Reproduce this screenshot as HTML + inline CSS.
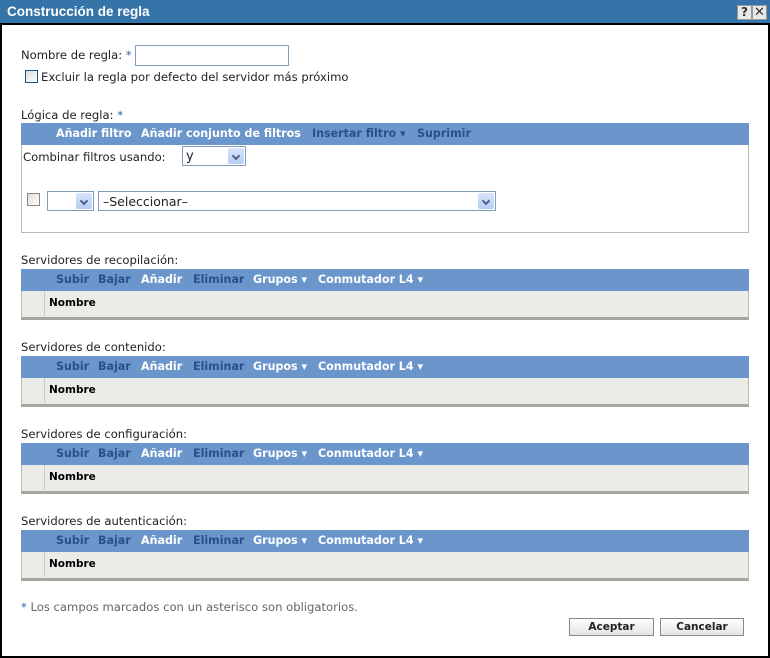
<!DOCTYPE html>
<html><head><meta charset="utf-8"><style>
*{margin:0;padding:0;box-sizing:border-box}
body{width:770px;height:658px;background:#fff;font-family:"DejaVu Sans","Liberation Sans",sans-serif;font-size:11.6px;color:#222;position:relative;overflow:hidden}
.a{position:absolute;white-space:nowrap}
.win{position:absolute;left:0;top:0;width:770px;height:658px;border:2px solid #000;border-top:none}
.title{left:0;top:0;width:770px;height:25px;background:#3574a8;border-bottom:2px solid #000}
.tb{position:absolute;left:21px;width:728px;height:22px;background:#6a96cc;font-weight:bold;font-size:11.1px}
.tb span{position:absolute;top:4px}
.w{color:#fff}.d{color:#2b4f8e}
.hdr{position:absolute;left:21px;width:728px;height:29px;background:#ebebe7;border:1px solid #b9b9ad;border-top:none;border-bottom:3px solid #a6a69e}
.hdr i{position:absolute;left:22px;top:0;width:1px;height:25px;background:#c9c9bf}
.hdr b{position:absolute;left:27px;top:6px;font-size:10.5px;color:#000}
.sel{position:absolute;border:1px solid #7f9db9;background:#fff}
.arr{position:absolute;right:1px;top:1px;width:16px;bottom:1px;background:linear-gradient(#d8e4fb,#b7cdf5);border-radius:2px}
.arr:after{content:"";position:absolute;left:5px;top:5px;width:4px;height:4px;border-right:2px solid #4d6185;border-bottom:2px solid #4d6185;transform:rotate(45deg)}
.cb{position:absolute;width:13px;height:13px;border:1px solid #1c5180;background:linear-gradient(135deg,#dcdcd7,#fff)}
.btn{position:absolute;top:618px;height:18px;border:1px solid #888;background:linear-gradient(#fff,#e4e4e4);font-weight:bold;font-size:10.5px;text-align:center;line-height:16px;color:#222}
.st{color:#2a63b0}
</style></head><body>
<div class="win"></div>
<div class="a title"></div>
<div class="a" style="left:7px;top:4px;color:#fff;font-weight:bold;font-size:13.5px;font-family:'Liberation Sans',sans-serif">Construcción de regla</div>
<div class="a" style="left:737px;top:5px;width:15px;height:15px;background:#e8e8e8;border:1px solid #999;font-weight:bold;font-size:12px;text-align:center;line-height:13px;color:#333">?</div>
<div class="a" style="left:752px;top:5px;width:15px;height:15px;background:#e8e8e8;border:1px solid #999;font-size:13px;text-align:center;line-height:13px;color:#333">✕</div>

<div class="a" style="left:21px;top:48px">Nombre de regla: <span class="st">*</span></div>
<div class="a" style="left:135px;top:45px;width:154px;height:21px;border:1px solid #7f9db9"></div>
<div class="cb" style="left:25px;top:70px"></div>
<div class="a" style="left:41px;top:70px">Excluir la regla por defecto del servidor más próximo</div>

<div class="a" style="left:21px;top:108px">Lógica de regla: <span class="st">*</span></div>
<div class="a" style="left:21px;top:123px;width:728px;height:110px;border:1px solid #b9b9ad"></div>
<div class="tb" style="top:123px"><span class="w" style="left:35px">Añadir filtro</span><span class="w" style="left:120px">Añadir conjunto de filtros</span><span class="d" style="left:291px">Insertar filtro ▾</span><span class="d" style="left:396px">Suprimir</span></div>
<div class="a" style="left:23px;top:150px">Combinar filtros usando:</div>
<div class="sel" style="left:182px;top:146px;width:64px;height:20px"><span class="a" style="left:3px;top:2px;font-size:13px">y</span><div class="arr"></div></div>
<div class="cb" style="left:27px;top:193px;border-color:#888"></div>
<div class="sel" style="left:47px;top:191px;width:47px;height:20px"><div class="arr"></div></div>
<div class="sel" style="left:98px;top:191px;width:398px;height:20px"><span class="a" style="left:4px;top:2px;font-size:12.5px">–Seleccionar–</span><div class="arr"></div></div>

<div class="a" style="left:21px;top:253px">Servidores de recopilación:</div>
<div class="tb" style="top:269px"><span class="d" style="left:35px">Subir</span><span class="d" style="left:77px">Bajar</span><span class="w" style="left:120px">Añadir</span><span class="d" style="left:172px">Eliminar</span><span class="w" style="left:232px">Grupos ▾</span><span class="w" style="left:297px">Conmutador L4 ▾</span></div>
<div class="hdr" style="top:291px"><i></i><b>Nombre</b></div>

<div class="a" style="left:21px;top:340px">Servidores de contenido:</div>
<div class="tb" style="top:356px"><span class="d" style="left:35px">Subir</span><span class="d" style="left:77px">Bajar</span><span class="w" style="left:120px">Añadir</span><span class="d" style="left:172px">Eliminar</span><span class="w" style="left:232px">Grupos ▾</span><span class="w" style="left:297px">Conmutador L4 ▾</span></div>
<div class="hdr" style="top:378px"><i></i><b>Nombre</b></div>

<div class="a" style="left:21px;top:427px">Servidores de configuración:</div>
<div class="tb" style="top:443px"><span class="d" style="left:35px">Subir</span><span class="d" style="left:77px">Bajar</span><span class="w" style="left:120px">Añadir</span><span class="d" style="left:172px">Eliminar</span><span class="w" style="left:232px">Grupos ▾</span><span class="w" style="left:297px">Conmutador L4 ▾</span></div>
<div class="hdr" style="top:465px"><i></i><b>Nombre</b></div>

<div class="a" style="left:21px;top:514px">Servidores de autenticación:</div>
<div class="tb" style="top:530px"><span class="d" style="left:35px">Subir</span><span class="d" style="left:77px">Bajar</span><span class="w" style="left:120px">Añadir</span><span class="d" style="left:172px">Eliminar</span><span class="w" style="left:232px">Grupos ▾</span><span class="w" style="left:297px">Conmutador L4 ▾</span></div>
<div class="hdr" style="top:552px"><i></i><b>Nombre</b></div>

<div class="a" style="left:21px;top:600px;color:#666"><span class="st">*</span> Los campos marcados con un asterisco son obligatorios.</div>
<div class="btn" style="left:569px;width:85px">Aceptar</div>
<div class="btn" style="left:660px;width:84px">Cancelar</div>
</body></html>
